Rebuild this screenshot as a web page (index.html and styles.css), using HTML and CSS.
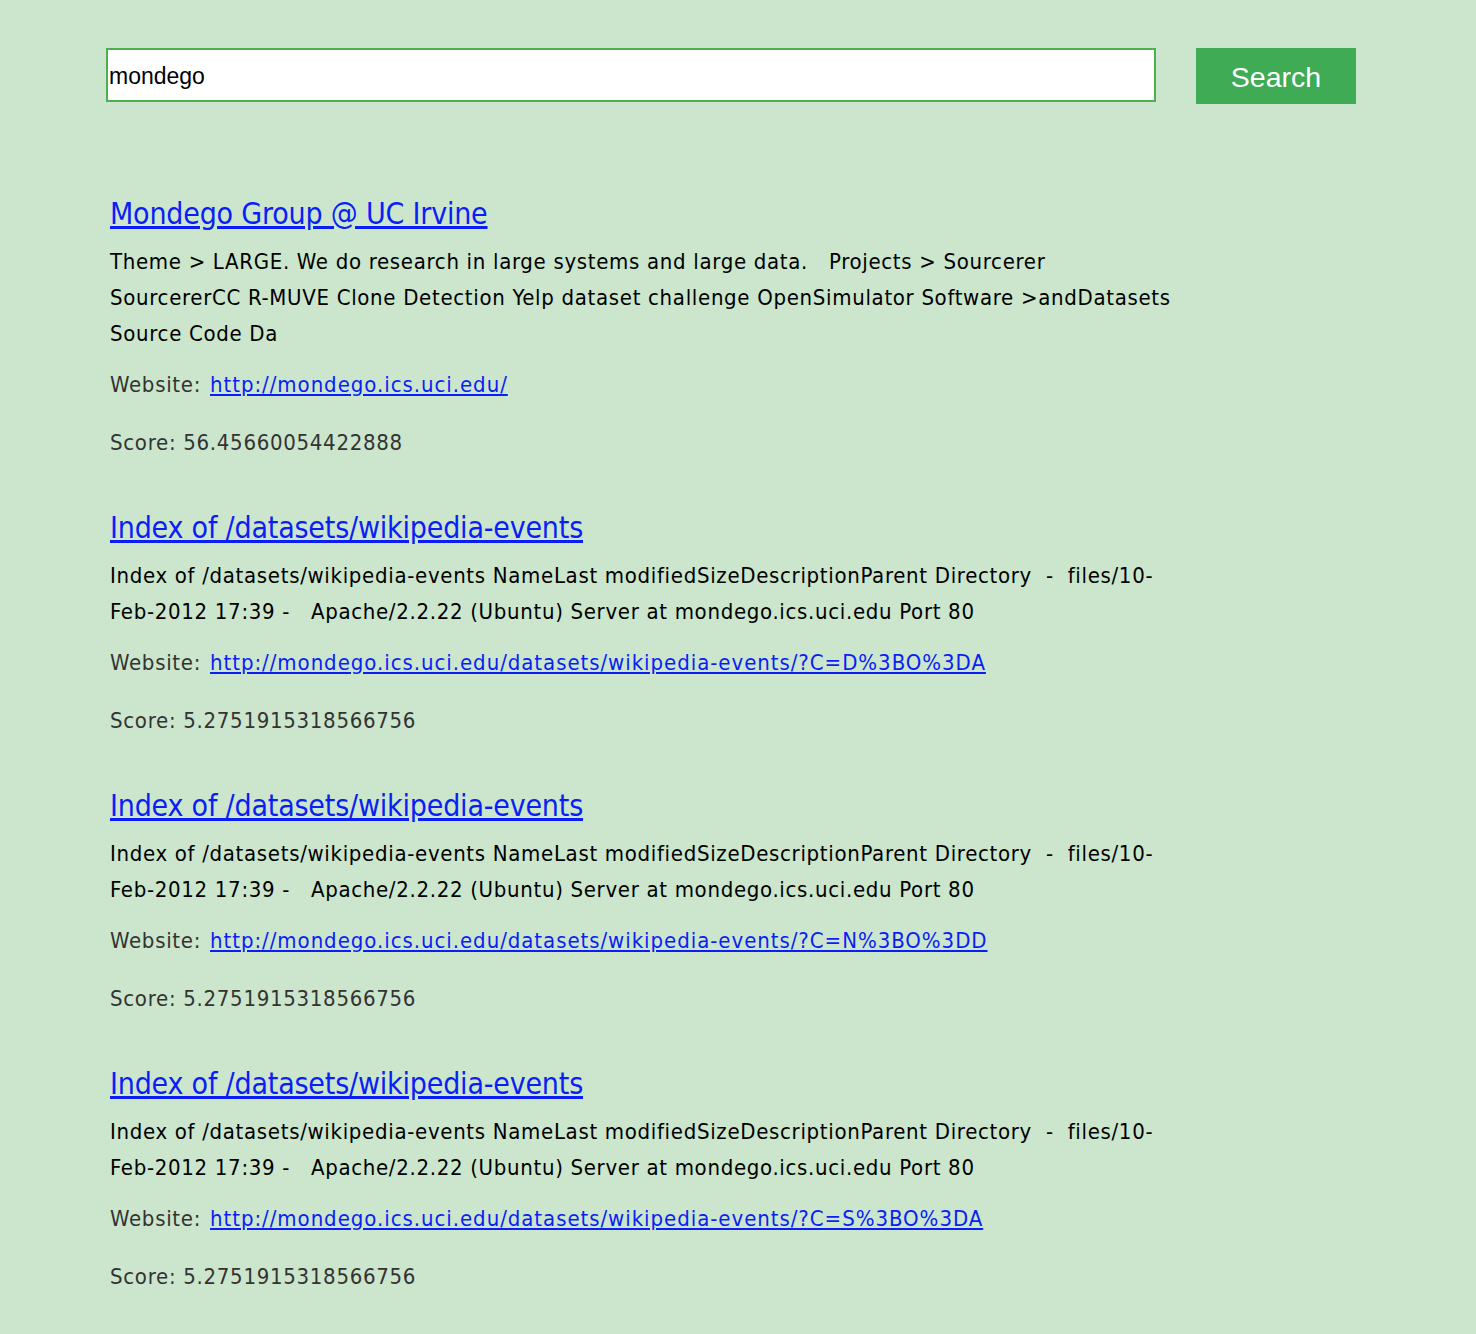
FILE: index.html
```html
<!DOCTYPE html>
<html lang="en">
<head>
    <meta charset="UTF-8">
    <meta name="viewport" content="width=device-width, initial-scale=1.0">
    <title>Search</title>
    <link rel="stylesheet" href="styles.css">
</head>
<body>
    <form class="search-bar" onsubmit="return false">
        <input type="text" class="search-input" value="mondego">
        <button type="submit" class="search-button">Search</button>
    </form>

    <div class="results">
        <div class="result">
            <a class="result-title" href="#">Mondego Group @ UC Irvine</a>
            <p class="description">Theme &gt; LARGE. We do research in large systems and large data. &nbsp; Projects &gt; Sourcerer SourcererCC R-MUVE Clone Detection Yelp dataset challenge OpenSimulator Software &gt;andDatasets Source Code Da</p>
            <p class="meta">Website: <a href="#">http://mondego.ics.uci.edu/</a></p>
            <p class="meta">Score: 56.45660054422888</p>
        </div>

        <div class="result">
            <a class="result-title" href="#">Index of /datasets/wikipedia-events</a>
            <p class="description">Index of /datasets/wikipedia-events NameLast modifiedSizeDescriptionParent Directory &nbsp;- &nbsp;files/10-Feb-2012 17:39 - &nbsp; Apache/2.2.22 (Ubuntu) Server at mondego.ics.uci.edu Port 80</p>
            <p class="meta">Website: <a href="#">http://mondego.ics.uci.edu/datasets/wikipedia-events/?C=D%3BO%3DA</a></p>
            <p class="meta">Score: 5.2751915318566756</p>
        </div>

        <div class="result">
            <a class="result-title" href="#">Index of /datasets/wikipedia-events</a>
            <p class="description">Index of /datasets/wikipedia-events NameLast modifiedSizeDescriptionParent Directory &nbsp;- &nbsp;files/10-Feb-2012 17:39 - &nbsp; Apache/2.2.22 (Ubuntu) Server at mondego.ics.uci.edu Port 80</p>
            <p class="meta">Website: <a href="#">http://mondego.ics.uci.edu/datasets/wikipedia-events/?C=N%3BO%3DD</a></p>
            <p class="meta">Score: 5.2751915318566756</p>
        </div>

        <div class="result">
            <a class="result-title" href="#">Index of /datasets/wikipedia-events</a>
            <p class="description">Index of /datasets/wikipedia-events NameLast modifiedSizeDescriptionParent Directory &nbsp;- &nbsp;files/10-Feb-2012 17:39 - &nbsp; Apache/2.2.22 (Ubuntu) Server at mondego.ics.uci.edu Port 80</p>
            <p class="meta">Website: <a href="#">http://mondego.ics.uci.edu/datasets/wikipedia-events/?C=S%3BO%3DA</a></p>
            <p class="meta">Score: 5.2751915318566756</p>
        </div>
    </div>
</body>
</html>
```

FILE: styles.css
```css
body {
    margin: 0;
    padding: 48px 0 0 0;
    background-color: #cbe6cc;
    font-family: "DejaVu Sans Condensed", "DejaVu Sans", sans-serif;
    color: #000;
}

.search-bar {
    display: flex;
    align-items: flex-start;
    gap: 40px;
    margin: 0 0 0 106px;
}

.search-input {
    box-sizing: border-box;
    width: 1050px;
    height: 54px;
    border: 2px solid #4caf50;
    padding: 2px 1px 0 1px;
    font-family: "Liberation Sans", Arial, sans-serif;
    font-size: 23px;
    color: #000;
    background: #fff;
    outline: none;
}

.search-button {
    width: 160px;
    height: 56px;
    border: none;
    background-color: #3fab54;
    color: #fff;
    font-family: "Liberation Sans", Arial, sans-serif;
    font-size: 28.5px;
    padding: 3px 0 0 0;
}

.results {
    margin: 92px 0 0 110px;
    width: 1070px;
}

.result {
    margin-bottom: 52px;
}

.result-title {
    display: inline-block;
    font-size: 30px;
    letter-spacing: -0.2px;
    line-height: 36px;
    color: #0a1ef5;
}

.description {
    margin: 12px 0 0 0;
    font-size: 22px;
    line-height: 36px;
    letter-spacing: 0.68px;
}

.meta {
    margin: 18px 0 0 0;
    font-size: 22px;
    line-height: 30px;
    letter-spacing: 0.7px;
    color: #333;
}

.meta + .meta {
    margin-top: 28px;
}

.meta a {
    margin-left: 2px;
    letter-spacing: 0.95px;
    color: #0a1ef5;
}
```
